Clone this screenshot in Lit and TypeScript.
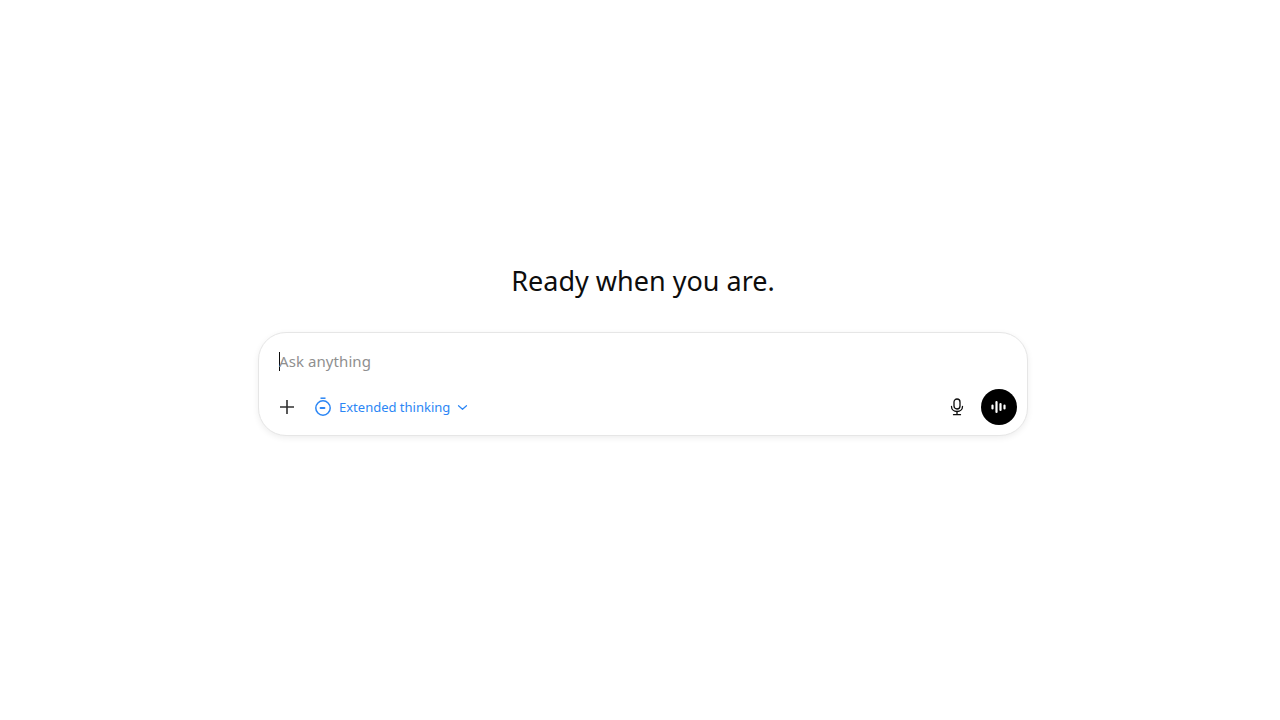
import { LitElement, html, css } from "lit";
import { customElement } from "lit/decorators.js";

@customElement("app-root")
export class AppRoot extends LitElement {
  static styles = css`
    :host {
      display: flex;
      flex-direction: column;
      align-items: center;
      box-sizing: border-box;
      width: 1280px;
      height: 720px;
      padding: 262px 0 0 6px;
      background: #fff;
      font-family: "Noto Sans", "Open Sans", sans-serif;
      color: #0d0d0d;
    }
    h1 {
      margin: 0;
      height: 38px;
      font-size: 27px;
      line-height: 38px;
      font-weight: 400;
      letter-spacing: 0;
      white-space: nowrap;
    }
    .card {
      box-sizing: border-box;
      width: 770px;
      height: 104px;
      margin-top: 32px;
      border: 1px solid #e6e6e6;
      border-radius: 28px;
      box-shadow: 0 2px 6px rgba(0, 0, 0, 0.07);
      background: #fff;
      display: flex;
      flex-direction: column;
      padding: 0 10px 10px 20px;
    }
    .input {
      flex: 1;
      display: flex;
      align-items: center;
      height: 56px;
      font-size: 15px;
      letter-spacing: 0.08px;
      color: #8f8f8f;
      box-sizing: border-box;
    }
    .caret {
      width: 1px;
      height: 19px;
      background: #0d0d0d;
      margin-right: -1px;
    }
    .tools {
      display: flex;
      align-items: center;
      height: 36px;
    }
    .plus {
      width: 16px;
      height: 16px;
      display: block;
      color: #303030;
    }
    .plus-wrap {
      width: 16px;
      display: flex;
    }
    .mode {
      display: flex;
      align-items: center;
      margin-left: 19px;
      color: #2b86f5;
      font-size: 13px;
    }
    .mode svg { display: block; }
    .label { margin-left: 7px; white-space: nowrap; }
    .chev { margin-left: 7px; }
    .spacer { flex: 1; }
    .mic { display: block; color: #0d0d0d; margin-right: 17px; }
    .voice {
      width: 36px;
      height: 36px;
      border-radius: 50%;
      background: #000;
      display: flex;
      align-items: center;
      justify-content: center;
    }
  `;

  render() {
    return html`
      <h1>Ready when you are.</h1>
      <div class="card">
        <div class="input"><span class="caret"></span><span>Ask anything</span></div>
        <div class="tools">
          <div class="plus-wrap">
            <svg class="plus" viewBox="0 0 16 16" fill="none" stroke="currentColor" stroke-width="1.6">
              <path d="M8 1v14M1 8h14" />
            </svg>
          </div>
          <div class="mode">
            <svg width="18" height="20" viewBox="0 0 18 20" fill="none" stroke="currentColor" stroke-width="1.5">
              <circle cx="9" cy="11" r="7.2" />
              <path d="M6.5 1.2h5" />
              <path d="M6.5 11h4" stroke-width="1.8" stroke-linecap="round" />
            </svg>
            <span class="label">Extended thinking</span>
            <svg class="chev" width="11" height="7" viewBox="0 0 11 7" fill="none" stroke="currentColor" stroke-width="1.2" stroke-linecap="round" stroke-linejoin="round">
              <path d="M1.5 1.7 5.5 5.3 9.5 1.7" />
            </svg>
          </div>
          <div class="spacer"></div>
          <svg class="mic" width="14" height="18" viewBox="0 0 14 18" fill="none" stroke="currentColor" stroke-width="1.3" stroke-linecap="round">
            <rect x="4" y="1" width="6" height="10" rx="3" />
            <path d="M1.5 8.500c0 3 2.300 5 5.500 5s5.500-2 5.500-5" />
            <path d="M7 13.500v3M3.500 16.700h7" />
          </svg>
          <div class="voice">
            <svg width="16" height="14" viewBox="0 0 16 14" fill="none" stroke="#fff" stroke-width="2.200" stroke-linecap="round">
              <path d="M1.500 5.500v3M5.500 2v10M9.500 4v6M13.500 5.500v3" />
            </svg>
          </div>
        </div>
      </div>
    `;
  }
}
